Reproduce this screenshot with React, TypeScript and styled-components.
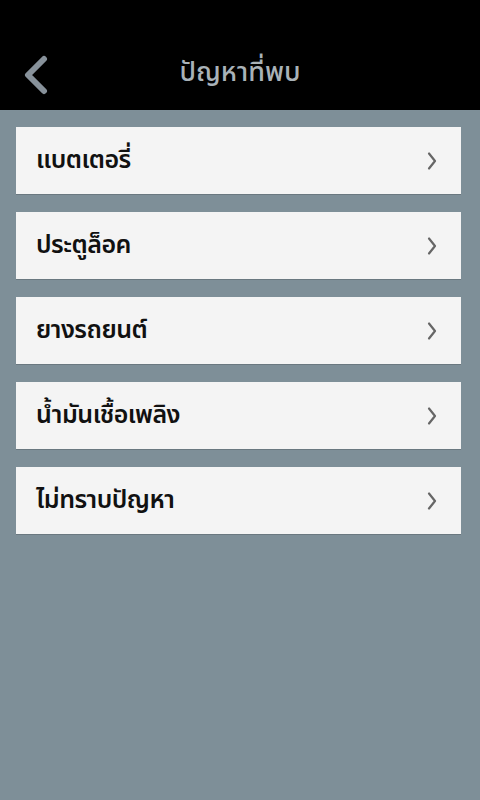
import React from "react";
import styled, { createGlobalStyle } from "styled-components";

const GlobalStyle = createGlobalStyle`
  html, body {
    margin: 0;
    padding: 0;
    background: #7e8f98;
  }
  body {
    font-family: "Noto Sans Thai", "Noto Sans", "DejaVu Sans", sans-serif;
  }
`;

const Screen = styled.div`
  width: 480px;
  min-height: 800px;
  background: #7e8f98;
`;

const Header = styled.header`
  height: 110px;
  background: #000;
  display: flex;
  align-items: center;
  position: relative;
  padding-top: 34px;
  box-sizing: border-box;
`;

const BackButton = styled.button`
  position: absolute;
  left: 18px;
  top: 53px;
  width: 34px;
  height: 44px;
  padding: 0;
  border: none;
  background: transparent;
  display: flex;
  align-items: center;
  justify-content: center;
`;

const Title = styled.h1`
  flex: 1;
  margin: 0;
  text-align: center;
  font-size: 27px;
  font-weight: 500;
  color: #a9b2b8;
  line-height: 1;
`;

const List = styled.ul`
  list-style: none;
  margin: 0;
  padding: 17px 19px 0 16px;
  display: flex;
  flex-direction: column;
  gap: 18px;
`;

const Item = styled.li`
  height: 67px;
  background: #f4f4f4;
  box-shadow: 0 1px 0 #6a7880;
  display: flex;
  align-items: center;
  padding: 0 24px 0 20px;
  box-sizing: border-box;
`;

const Label = styled.span`
  flex: 1;
  font-size: 25px;
  font-weight: 600;
  color: #111;
  letter-spacing: -0.5px;
  padding-bottom: 2px;
`;

const Chevron = () => (
  <svg width="10" height="20" viewBox="0 0 10 20">
    <path d="M2 2.5 L8 10 L2 17.5" fill="none" stroke="#666" strokeWidth="2.2" strokeLinecap="round" strokeLinejoin="round" />
  </svg>
);

const BackIcon = () => (
  <svg width="26" height="40" viewBox="0 0 26 40">
    <path d="M22 4 L6 20 L22 36" fill="none" stroke="#87919a" strokeWidth="6" strokeLinecap="round" strokeLinejoin="round" />
  </svg>
);

const problems = ["แบตเตอรี่", "ประตูล็อค", "ยางรถยนต์", "น้ำมันเชื้อเพลิง", "ไม่ทราบปัญหา"];

export default function App() {
  return (
    <Screen>
      <GlobalStyle />
      <Header>
        <BackButton aria-label="back">
          <BackIcon />
        </BackButton>
        <Title>ปัญหาที่พบ</Title>
      </Header>
      <List>
        {problems.map((p) => (
          <Item key={p}>
            <Label>{p}</Label>
            <Chevron />
          </Item>
        ))}
      </List>
    </Screen>
  );
}
